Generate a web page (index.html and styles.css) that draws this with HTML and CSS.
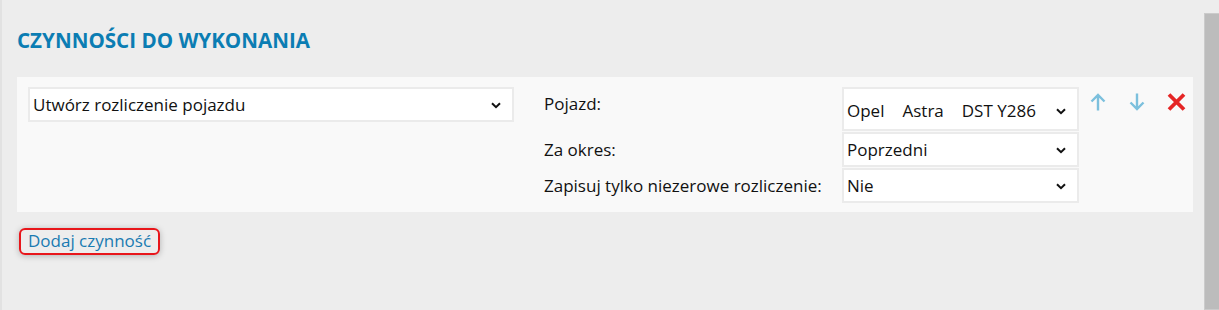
FILE: index.html
```html
<!DOCTYPE html>
<html lang="pl">
<head>
  <meta charset="UTF-8">
  <title>Czynności do wykonania</title>
  <link rel="stylesheet" href="styles.css">
</head>
<body>
  <div class="page">
    <main>
      <h1>CZYNNOŚCI DO WYKONANIA</h1>
      <div class="task">
        <div class="select wide">
          <span>Utwórz rozliczenie pojazdu</span>
          <svg class="chev" width="10" height="7" viewBox="0 0 10 7"><path d="M1 1.2 L5 5.2 L9 1.2" fill="none" stroke="#111" stroke-width="2"/></svg>
        </div>
        <div class="params">
          <label class="first">Pojazd:</label>
          <div class="select tall">
            <span class="veh"><span>Opel</span><span>Astra</span><span>DST Y286</span></span>
            <svg class="chev" width="10" height="7" viewBox="0 0 10 7"><path d="M1 1.2 L5 5.2 L9 1.2" fill="none" stroke="#111" stroke-width="2"/></svg>
          </div>
          <label>Za okres:</label>
          <div class="select">
            <span>Poprzedni</span>
            <svg class="chev" width="10" height="7" viewBox="0 0 10 7"><path d="M1 1.2 L5 5.2 L9 1.2" fill="none" stroke="#111" stroke-width="2"/></svg>
          </div>
          <label>Zapisuj tylko niezerowe rozliczenie:</label>
          <div class="select">
            <span>Nie</span>
            <svg class="chev" width="10" height="7" viewBox="0 0 10 7"><path d="M1 1.2 L5 5.2 L9 1.2" fill="none" stroke="#111" stroke-width="2"/></svg>
          </div>
        </div>
        <div class="actions">
          <a class="act up" title="W górę">
            <svg width="16" height="18" viewBox="0 0 16 18"><path d="M8 17.5 V2 M1.5 8.5 L8 2 L14.5 8.5" fill="none" stroke="#7cc0dd" stroke-width="2.4"/></svg>
          </a>
          <a class="act" title="W dół">
            <svg width="16" height="18" viewBox="0 0 16 18"><path d="M8 0.5 V16 M1.5 9.5 L8 16 L14.5 9.5" fill="none" stroke="#7cc0dd" stroke-width="2.4"/></svg>
          </a>
          <a class="act" title="Usuń">
            <svg width="19" height="18" viewBox="0 0 19 18"><path d="M2 1.5 L17 16.5 M17 1.5 L2 16.5" fill="none" stroke="#e52525" stroke-width="3.8"/></svg>
          </a>
        </div>
      </div>
      <a class="add" href="#">Dodaj czynność</a>
    </main>
    <div class="scroll"></div>
  </div>
</body>
</html>
```
FILE: styles.css
```css
* { box-sizing: border-box; }
html, body { margin: 0; height: 100%; }
body { background: #ededed; font-family: 'Open Sans', 'Noto Sans', sans-serif; color: #111; overflow: hidden; }
.page { display: flex; height: 310px; border-left: 2px solid #e2e2e2; }
main { flex: 1; min-width: 0; padding: 27px 11px 0 15px; }
.scroll { width: 15px; margin-top: 13px; background: #bcbcbc; border: 1px solid #cbcbcb; border-right: 0; }

h1 { margin: 0 0 24px; font-size: 20.6px; font-weight: 700; color: #0b7db3; line-height: 26px; }

.task { display: flex; align-items: flex-start; background: #f9f9f9; padding: 10px 5px 9px 11px; }
.select { display: flex; align-items: center; justify-content: space-between; background: #fff; border: 2px solid #ebebeb; height: 35px; padding: 0 11px 0 3px; font-size: 17px; line-height: 20px; }
.select.wide { flex: none; width: 486px; height: 35px; }
.select.tall { height: 44px; padding-top: 4px; }
.veh { display: flex; gap: 18px; }
.chev { flex: none; margin-top: 1px; }

.params { flex: none; display: grid; grid-template-columns: 298px 237px; row-gap: 1px; margin-left: 30px; }
.params label { display: flex; align-items: center; font-size: 17px; }
.params label.first { align-items: flex-start; padding-top: 5px; }

.actions { flex: none; display: flex; gap: 22px; margin-left: 11px; padding-top: 6px; }
.act { display: block; cursor: pointer; }
.act.up { margin-right: 1px; }

.add { display: inline-block; margin: 16px 0 0 2px; padding: 1px 7px 2px 7px; border: 2px solid #e8161b; border-radius: 6px; box-shadow: 0 1px 6px rgba(0, 0, 0, 0.25); color: #1a7bb2; text-decoration: none; font-size: 17px; line-height: 20px; }
```
